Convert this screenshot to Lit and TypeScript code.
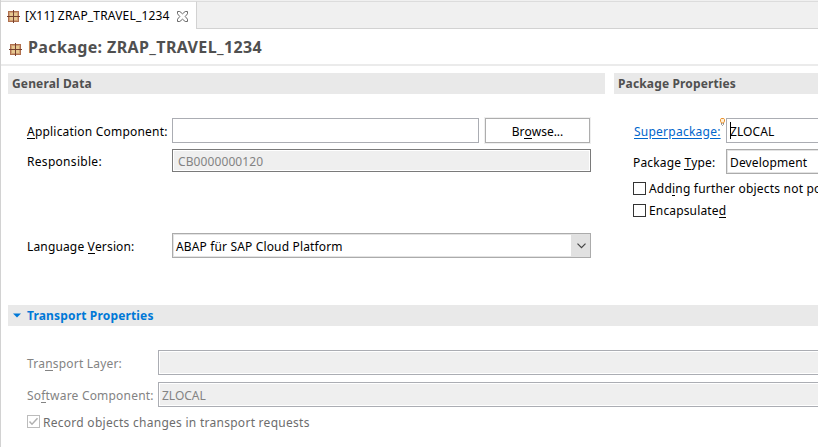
import { LitElement, html, css, svg } from "lit";
import { customElement, property } from "lit/decorators.js";

@customElement("package-icon")
class PackageIcon extends LitElement {
  static styles = css`
    :host { display: block; width: 13px; height: 13px; flex: none; }
    svg { display: block; }
  `;
  render() {
    return html`<svg width="13" height="13" viewBox="0 0 13 13" shape-rendering="crispEdges">
      <rect x="1" y="1" width="11" height="11" fill="#b0704e" />
      <rect x="2" y="2" width="9" height="9" fill="#cf9f74" />
      ${[[3, 3], [7, 3], [3, 7], [7, 7]].map(
        ([x, y]) => svg`<rect x=${x} y=${y} width="3" height="3" fill="#e6c890" />`
      )}
      <path d="M6 0h1v13h-1zM0 6h13v1h-13z" fill="#74402f" />
    </svg>`;
  }
}

@customElement("section-bar")
class SectionBar extends LitElement {
  @property({ type: Boolean }) declare expandable: boolean;
  static styles = css`
    :host { display: flex; align-items: center; height: 21px; background: #e9e9e9; color: #505050;
      font-weight: 700; padding-left: 4px; box-sizing: border-box; letter-spacing: 0.14px; }
    :host([expandable]) { color: #0078d7; letter-spacing: 0.16px; }
    svg { display: block; margin: 0 6px 0 1px; }
  `;
  render() {
    return html`${this.expandable
        ? html`<svg width="8" height="5" viewBox="0 0 8 5"><path d="M0 .5h8L4 4.5z" fill="#0078d7" /></svg>`
        : null}<slot></slot>`;
  }
}

@customElement("app-root")
class AppRoot extends LitElement {
  static styles = css`
    :host { display: block; width: 818px; height: 447px; overflow: hidden; background: #fff; color: #000;
      font: 12px/16px "Noto Sans", "Open Sans", sans-serif; white-space: nowrap; letter-spacing: 0.15px; }
    * { box-sizing: border-box; }
    u { text-decoration: none; box-shadow: inset 0 -1px currentColor; display: inline-block; height: 15px; line-height: 16px; vertical-align: top; }
    .page { height: 447px; border-left: 1px solid #d2d2d2; display: flex; flex-direction: column; }
    .tabs { height: 29px; display: flex; padding-top: 1px; background: #f0f0f0; flex: none; }
    .tab { width: 196px; border-top: 1px solid #dcdcdc; border-right: 1px solid #d2d2d2; background: #fff;
      display: flex; align-items: center; padding: 1px 0 0 6px; }
    .tab .name { margin-left: 5px; width: 152px; letter-spacing: 0.18px; }
    .rest { flex: 1; border-top: 1px solid #dcdcdc; border-bottom: 1px solid #d2d2d2; }
    .head { height: 37px; border-bottom: 2px solid #ebebeb; display: flex; align-items: center; padding-left: 8px; flex: none; }
    .head package-icon { margin-top: 5px; }
    .title { font-size: 16px; line-height: 22px; font-weight: 700; color: #505050; margin-left: 6px; letter-spacing: 0.38px; }
    .cols { display: flex; gap: 9px; padding: 7px 0 0 7px; height: 239px; flex: none; }
    .left { width: 597px; flex: none; }
    .right { flex: 1; min-width: 0; }
    .form { display: grid; padding: 24px 0 0 19px; align-items: center; }
    .form > span { padding-top: 2px; }
    .left .form { grid-template-columns: 145px 307px 112px; column-gap: 0; grid-template-rows: 25px 6px 23px 61px 25px; }
    .right .form { grid-template-columns: 93px 280px; grid-template-rows: 25px 6px 25px; }
    .field, .combo { height: 25px; border: 1px solid #abadb3; display: flex; align-items: center; padding: 2px 3px 0; }
    .span { grid-column: 2 / 4; }
    .r3 { grid-row: 3; }
    .r5 { grid-row: 5; }
    .ro { height: 23px; border-color: #7a7a7a; background: #efefef; box-shadow: inset 0 0 0 1px #fff; color: #838383; padding-left: 5px; letter-spacing: 0.1px; }
    .combo { border-color: #ababab; box-shadow: inset 0 0 0 1px #e3e3e3; justify-content: space-between; padding: 0 0 0 3px; }
    .combo span { padding-top: 2px; }
    .drop { width: 19px; height: 23px; background: #e1e1e1; display: flex; align-items: center; justify-content: center; padding-left: 2px; }
    .button { height: 25px; width: 105px; margin-left: 6px; border: 1px solid #adadad; outline: 1px solid #efefef;
      display: flex; align-items: center; justify-content: center; padding-top: 2px; letter-spacing: 0; }
    .form > .link { color: #0066cc; text-decoration: underline; text-underline-offset: 2px; position: relative; justify-self: start;
      margin-left: 1px; letter-spacing: 0.24px; }
    .bulb { position: absolute; left: 86px; top: -4px; }
    .caret { width: 1px; height: 17px; background: #000; margin: -2px -1px 0 0; }
    .zl { letter-spacing: 0.1px; }
    .w1 { letter-spacing: 0.2px; }
    .w2 { letter-spacing: 0.3px; }
    .w3 { letter-spacing: 0.27px; }
    .checks { padding: 7px 0 0 19px; display: flex; flex-direction: column; gap: 6px; }
    .check { display: flex; align-items: center; height: 16px; gap: 3px; }
    .box { width: 13px; height: 13px; border: 1px solid #333; flex: none; margin-top: -1px; }
    .transport { padding-left: 7px; }
    .transport .form { grid-template-columns: 131px 1fr; grid-template-rows: 25px 7px 25px; color: #838383; }
    .dis { background: #efefef; border-right: 0; box-shadow: inset 1px 0 #fff, inset 0 1px #fff, inset 0 -1px #fff; letter-spacing: 0; }
    .transport .checks { padding-top: 7px; color: #6d6d6d; }
    .transport .check span { padding-top: 2px; }
    .transport .box { border-color: #bcbcbc; }
    svg { display: block; }
  `;

  render() {
    return html`<div class="page">
      <div class="tabs">
        <div class="tab">
          <package-icon></package-icon><span class="name">[X11] ZRAP_TRAVEL_1234</span>
          <svg width="11" height="11" viewBox="0 0 11 11" fill="none" stroke="#6a6a6a">
            <path d="M.5.5h2.3L5.5 2.8 8.2.5h2.3v2.3L8.2 5.5l2.3 2.7v2.3H8.2L5.5 8.2 2.8 10.5H.5V8.2l2.3-2.7L.5 2.8z" />
          </svg>
        </div>
        <div class="rest"></div>
      </div>
      <div class="head"><package-icon></package-icon><span class="title">Package: ZRAP_TRAVEL_1234</span></div>
      <div class="cols">
        <div class="left">
          <section-bar>General Data</section-bar>
          <div class="form">
            <span class="w1"><u>A</u>pplication Component:</span>
            <div class="field"></div>
            <div class="button"><span>Br<u>o</u>wse...</span></div>
            <span class="r3 w2">Responsible:</span>
            <div class="field ro span r3"><span>CB0000000120</span></div>
            <span class="r5">Language <u>V</u>ersion:</span>
            <div class="combo span r5"><span>ABAP für SAP Cloud Platform</span>
              <div class="drop"><svg width="9" height="6" viewBox="0 0 9 6" fill="none" stroke="#444" stroke-width="1.2"><path d="M.5.7l4 4 4-4" /></svg></div>
            </div>
          </div>
        </div>
        <div class="right">
          <section-bar>Package Properties</section-bar>
          <div class="form">
            <span class="link">Superpackage:<svg class="bulb" width="5" height="8" viewBox="0 0 5 8">
              <path d="M1.2.5h2.6l.7.8v1.9L3.5 5h-2l-1-1.8V1.3z" fill="#fff0d8" stroke="#e8902c" />
              <path d="M1.5 5v1.5l1 1 1-1V5" fill="none" stroke="#888" /></svg></span>
            <div class="field"><i class="caret"></i><span class="zl">ZLOCAL</span></div>
            <span class="r3">Package <u>T</u>ype:</span>
            <div class="combo r3"><span>Development</span></div>
          </div>
          <div class="checks">
            <div class="check"><i class="box"></i><span class="w1">Add<u>i</u>ng further objects not possible</span></div>
            <div class="check"><i class="box"></i><span>Encapsulate<u>d</u></span></div>
          </div>
        </div>
      </div>
      <div class="transport">
        <section-bar expandable>Transport Properties</section-bar>
        <div class="form">
          <span class="w1">Tra<u>n</u>sport Layer:</span>
          <div class="field dis"></div>
          <span class="r3 w1">So<u>f</u>tware Component:</span>
          <div class="field dis r3"><span>ZLOCAL</span></div>
        </div>
        <div class="checks">
          <div class="check"><i class="box"><svg width="11" height="11" viewBox="0 0 11 11" fill="none" stroke="#b0b0b0" stroke-width="1.5"><path d="M1.5 5.5L4 8.2l5.5-6" /></svg></i><span class="w3">Record objects changes in transport requests</span></div>
        </div>
      </div>
    </div>`;
  }
}
